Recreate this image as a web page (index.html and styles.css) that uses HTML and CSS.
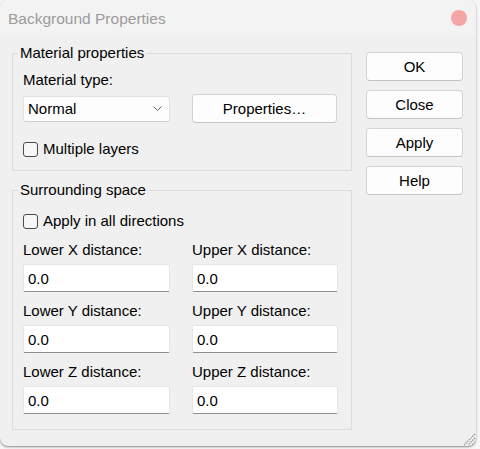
FILE: index.html
```html
<!DOCTYPE html>
<html>
<head>
<meta charset="utf-8">
<link rel="stylesheet" href="styles.css">
</head>
<body>
<div class="window">
  <div class="titlebar">
    <span class="title">Background Properties</span>
    <span class="close"></span>
  </div>
  <div class="client">
    <div class="main">
      <fieldset class="group g1">
        <legend>Material properties</legend>
        <div class="label">Material type:</div>
        <div class="row">
          <div class="select">
            <span>Normal</span>
            <svg class="chev" width="9" height="5" viewBox="0 0 9 5"><path d="M0.5 0.5 L4.5 4.5 L8.5 0.5" fill="none" stroke="#666" stroke-width="1"/></svg>
          </div>
          <button class="btn props">Properties…</button>
        </div>
        <div class="check first"><span class="box"></span><span>Multiple layers</span></div>
      </fieldset>
      <fieldset class="group g2">
        <legend>Surrounding space</legend>
        <div class="check second"><span class="box"></span><span>Apply in all directions</span></div>
        <div class="grid">
          <div class="field"><div class="flabel">Lower X distance:</div><div class="input">0.0</div></div>
          <div class="field"><div class="flabel">Upper X distance:</div><div class="input">0.0</div></div>
          <div class="field"><div class="flabel">Lower Y distance:</div><div class="input">0.0</div></div>
          <div class="field"><div class="flabel">Upper Y distance:</div><div class="input">0.0</div></div>
          <div class="field"><div class="flabel">Lower Z distance:</div><div class="input">0.0</div></div>
          <div class="field"><div class="flabel">Upper Z distance:</div><div class="input">0.0</div></div>
        </div>
      </fieldset>
    </div>
    <div class="buttons">
      <button class="btn side">OK</button>
      <button class="btn side">Close</button>
      <button class="btn side">Apply</button>
      <button class="btn side">Help</button>
    </div>
  </div>
  <svg class="grip" width="13" height="13" viewBox="0 0 13 13">
    <path d="M12 1 L1 12 M12 5 L5 12 M12 9 L9 12" stroke="#8c8c8c" stroke-width="1.2" stroke-dasharray="1.4 1" fill="none"/>
  </svg>
</div>
</body>
</html>
```

FILE: styles.css
```css
html, body {
  margin: 0;
  padding: 0;
}
body {
  width: 480px;
  height: 449px;
  background: #f6f6f6;
  font-family: "Liberation Sans", Arial, sans-serif;
  font-size: 15px;
  color: #000;
  overflow: hidden;
}
.window {
  position: relative;
  width: 476px;
  height: 446px;
  background: #f0f0f0;
  border-radius: 8px;
  overflow: hidden;
  box-shadow: 0 1px 2px rgba(0, 0, 0, 0.45);
}
.titlebar {
  height: 36px;
  background: #f3f3f3;
  display: flex;
  align-items: center;
  justify-content: space-between;
  padding: 0 9px 0 8px;
}
.title {
  color: #9b9b9b;
  font-size: 15.5px;
  padding-top: 1px;
}
.close {
  width: 16px;
  height: 16px;
  border-radius: 50%;
  background: #f4a6a6;
}
.client {
  display: flex;
  gap: 14px;
  padding: 7px 13px 0 12px;
}
.main {
  width: 341px;
}
.group {
  margin: 0;
  border: 1px solid #dcdcdc;
  padding: 0 10px;
  min-width: 0;
}
.group legend {
  padding: 0 2px;
  margin-left: -5px;
  line-height: 20px;
}
.g1 {
  padding-bottom: 11px;
}
.g2 {
  margin-top: 9px;
  padding-bottom: 15px;
}
.label {
  margin-top: 7px;
  line-height: 20px;
}
.row {
  display: flex;
  align-items: center;
  gap: 22px;
  margin-top: 4px;
  height: 29px;
}
.select {
  width: 147px;
  height: 26px;
  box-sizing: border-box;
  background: #fdfdfd;
  border: 1px solid #e3e3e3;
  border-bottom-color: #cfcfcf;
  border-radius: 3px;
  display: flex;
  align-items: center;
  justify-content: space-between;
  padding: 0 7px 0 4px;
}
.chev {
  margin-top: -1px;
}
.btn {
  font: inherit;
  color: #000;
  background: #fdfdfd;
  border: 1px solid #d3d3d3;
  border-bottom-color: #c4c4c4;
  border-radius: 4px;
  height: 29px;
  padding: 0;
  box-sizing: border-box;
}
.props {
  width: 145px;
}
.check {
  display: flex;
  align-items: center;
  gap: 5px;
  line-height: 20px;
}
.check.first {
  margin-top: 16px;
}
.check.second {
  margin-top: 11px;
}
.box {
  width: 15px;
  height: 15px;
  box-sizing: border-box;
  border: 1px solid #4a4a4a;
  border-radius: 3px;
  background: #f7f7f7;
}
.grid {
  display: grid;
  grid-template-columns: 147px 146px;
  column-gap: 22px;
  row-gap: 9px;
  margin-top: 9px;
}
.flabel {
  line-height: 20px;
}
.input {
  margin-top: 4px;
  height: 28px;
  box-sizing: border-box;
  background: #fff;
  border: 1px solid #e6e6e6;
  border-bottom-color: #8e8e8e;
  border-radius: 2px;
  padding-left: 4px;
  display: flex;
  align-items: center;
}
.buttons {
  display: flex;
  flex-direction: column;
  gap: 9px;
  margin-top: 9px;
}
.side {
  width: 97px;
}
.grip {
  position: absolute;
  right: 0;
  bottom: 0;
}
```
